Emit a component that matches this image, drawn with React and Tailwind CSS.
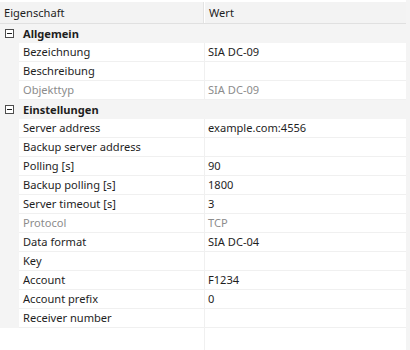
import React from 'react'

const groups = [
  {
    title: 'Allgemein',
    rows: [
      { name: 'Bezeichnung', value: 'SIA DC-09' },
      { name: 'Beschreibung', value: '' },
      { name: 'Objekttyp', value: 'SIA DC-09', readOnly: true },
    ],
  },
  {
    title: 'Einstellungen',
    rows: [
      { name: 'Server address', value: 'example.com:4556' },
      { name: 'Backup server address', value: '' },
      { name: 'Polling [s]', value: '90' },
      { name: 'Backup polling [s]', value: '1800' },
      { name: 'Server timeout [s]', value: '3' },
      { name: 'Protocol', value: 'TCP', readOnly: true },
      { name: 'Data format', value: 'SIA DC-04' },
      { name: 'Key', value: '' },
      { name: 'Account', value: 'F1234' },
      { name: 'Account prefix', value: '0' },
      { name: 'Receiver number', value: '' },
    ],
  },
]

function MinusBox() {
  return (
    <svg width="9" height="9" viewBox="0 0 9 9" className="shrink-0">
      <rect x="0.5" y="0.5" width="8" height="8" fill="white" stroke="#4d4d4d" />
      <line x1="2" y1="4.5" x2="7" y2="4.5" stroke="#1e1e1e" />
    </svg>
  )
}

function GroupRow({ title }) {
  return (
    <div className="h-[19px] flex items-center bg-[#f4f4f4]">
      <div className="w-[23px] pl-[5px] flex items-center">
        <MinusBox />
      </div>
      <span className="font-bold text-[#1e1e1e]">{title}</span>
    </div>
  )
}

function PropRow({ name, value, readOnly }) {
  const color = readOnly ? 'text-[#8c8c8c]' : 'text-[#1e1e1e]'
  return (
    <div className="h-[19px] flex">
      <div className="w-[19px] bg-[#f4f4f4]" />
      <div className={`w-[185px] pl-[4px] flex items-center bg-white border-b border-[#f0f0f0] ${color}`}>
        {name}
      </div>
      <div className="w-px bg-[#f0f0f0]" />
      <div className={`flex-1 pl-[3px] flex items-center bg-white border-b border-[#f0f0f0] ${color}`}>
        {value}
      </div>
    </div>
  )
}

export default function App() {
  return (
    <div className="w-[410px] h-[350px] flex bg-white text-[11.1px] leading-none font-['Noto_Sans',sans-serif] overflow-hidden">
      <div className="w-[406px] flex flex-col">
        {/* header */}
        <div className="h-[24px] flex border-t-2 border-white bg-[#f3f3f3] border-b border-b-[#e0e0e0] text-[#1e1e1e]">
          <div className="w-[204px] pl-[4px] flex items-center border-r border-[#e3e3e3]">Eigenschaft</div>
          <div className="flex-1 pl-[4px] flex items-center border-l border-white">Wert</div>
        </div>

        {groups.map((g) => (
          <div key={g.title}>
            <GroupRow title={g.title} />
            {g.rows.map((r) => (
              <PropRow key={r.name} {...r} />
            ))}
          </div>
        ))}

        <div className="flex-1 flex">
          <div className="w-[204px]" />
          <div className="w-px bg-[#f0f0f0]" />
        </div>
      </div>
      <div className="w-[4px] bg-[#f4f4f4]" />
    </div>
  )
}
